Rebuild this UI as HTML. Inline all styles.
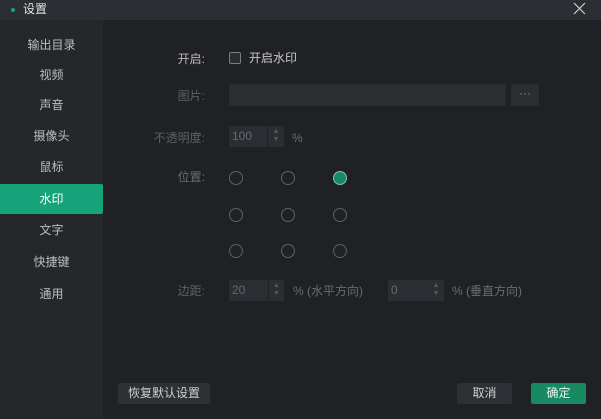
<!DOCTYPE html><html><head><meta charset="utf-8"><style>
*{margin:0;padding:0;box-sizing:border-box}
body{width:601px;height:419px;background:#1f2124;font-family:"Liberation Sans","Noto Sans CJK SC",sans-serif;font-size:12px;color:#c8c8c8;position:relative;overflow:hidden}
.a{position:absolute}
.title{left:0;top:0;width:601px;height:20px;background:#2b2e32}
.side{left:0;top:20px;width:103px;height:399px;background:#25282b}
.it{position:absolute;left:0;width:103px;text-align:center;color:#bdbdbd;line-height:14px}
.lbl{position:absolute;right:396px;text-align:right;line-height:14px}
.box{position:absolute;background:#2a2d31}
.r{position:absolute;width:14px;height:14px;border:1.5px solid #5f6265;border-radius:50%}
.btn{position:absolute;background:#2d3035;border-radius:2px;text-align:center;line-height:21px;height:21px;color:#cfcfcf}
.sp{position:absolute;background:#2a2d31;color:#55585c;font-size:7px;text-align:center;line-height:8px}
</style></head><body>
<div class="a title"></div>
<div class="a" style="left:11px;top:8px;width:4px;height:4px;border-radius:50%;background:#1fa07a"></div>
<div class="a" style="left:23px;top:2px;line-height:15px;color:#e0e0e0">设置</div>
<svg class="a" style="left:573px;top:2px" width="13" height="13" viewBox="0 0 13 13"><path d="M1 1L12 12M12 1L1 12" stroke="#cfcfcf" stroke-width="1.2"/></svg>
<div class="a side"></div>
<div class="it" style="top:38px">输出目录</div>
<div class="it" style="top:68px">视频</div>
<div class="it" style="top:98px">声音</div>
<div class="it" style="top:129px">摄像头</div>
<div class="it" style="top:160px">鼠标</div>
<div class="a" style="left:0;top:184px;width:103px;height:30px;background:#17a37a;border-radius:0 2px 2px 0"></div>
<div class="it" style="top:192px;color:#fff">水印</div>
<div class="it" style="top:223px">文字</div>
<div class="it" style="top:255px">快捷键</div>
<div class="it" style="top:287px">通用</div>

<div class="lbl" style="top:52px;color:#b8b8b8">开启:</div>
<div class="a" style="left:229px;top:52px;width:12px;height:12px;border:1.5px solid #7a7c7e;border-radius:2px;background:#2a2d31"></div>
<div class="a" style="left:249px;top:51px;line-height:14px;color:#c8c8c8">开启水印</div>

<div class="lbl" style="top:89px;color:#5d6064">图片:</div>
<div class="box" style="left:229px;top:84px;width:277px;height:22px"></div>
<div class="box" style="left:511px;top:84px;width:28px;height:22px;color:#8a8c8e;text-align:center;line-height:18px">···</div>

<div class="lbl" style="top:131px;color:#5d6064">不透明度:</div>
<div class="box" style="left:229px;top:126px;width:38px;height:21px;color:#66696c;line-height:21px;padding-left:3px">100</div>
<div class="sp" style="left:268px;top:126px;width:16px;height:21px;padding-top:2px">▲<br>▼</div>
<div class="a" style="left:292px;top:131px;line-height:14px;color:#6a6d70">%</div>

<div class="lbl" style="top:170px;color:#6a6d70">位置:</div>
<div class="r" style="left:229px;top:171px"></div>
<div class="r" style="left:281px;top:171px"></div>
<div class="r" style="left:333px;top:171px;background:#168a64;border-color:#8fbfae"></div>
<div class="r" style="left:229px;top:208px"></div>
<div class="r" style="left:281px;top:208px"></div>
<div class="r" style="left:333px;top:208px"></div>
<div class="r" style="left:229px;top:244px"></div>
<div class="r" style="left:281px;top:244px"></div>
<div class="r" style="left:333px;top:244px"></div>

<div class="lbl" style="top:284px;color:#5d6064">边距:</div>
<div class="box" style="left:229px;top:280px;width:39px;height:21px;color:#66696c;line-height:21px;padding-left:3px">20</div>
<div class="sp" style="left:269px;top:280px;width:15px;height:21px;padding-top:2px">▲<br>▼</div>
<div class="a" style="left:293px;top:284px;line-height:14px;color:#6a6d70">% (水平方向)</div>
<div class="box" style="left:388px;top:280px;width:40px;height:21px;color:#66696c;line-height:21px;padding-left:3px">0</div>
<div class="sp" style="left:428px;top:280px;width:16px;height:21px;padding-top:2px">▲<br>▼</div>
<div class="a" style="left:452px;top:284px;line-height:14px;color:#6a6d70">% (垂直方向)</div>

<div class="btn" style="left:118px;top:383px;width:92px">恢复默认设置</div>
<div class="btn" style="left:457px;top:383px;width:55px">取消</div>
<div class="btn" style="left:531px;top:383px;width:55px;background:#178a62;color:#e8f5ef">确定</div>
</body></html>
